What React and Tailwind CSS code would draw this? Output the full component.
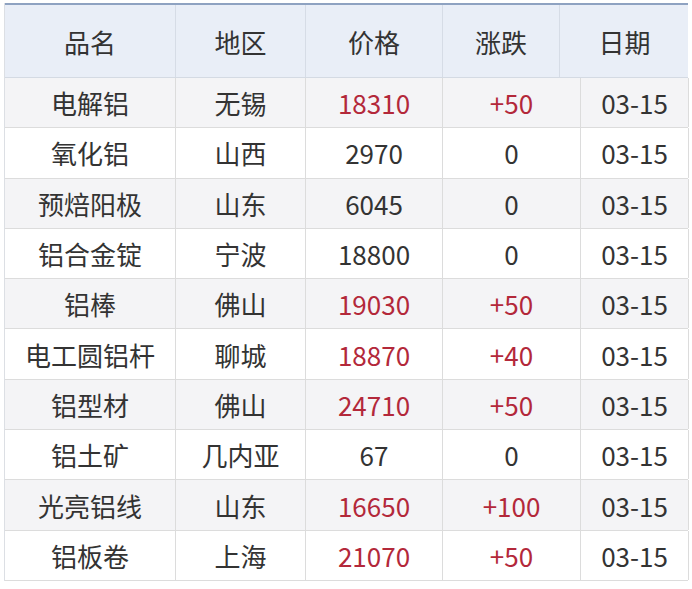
import React from 'react';

const rows = [
  ['电解铝', '无锡', '18310', '+50'],
  ['氧化铝', '山西', '2970', '0'],
  ['预焙阳极', '山东', '6045', '0'],
  ['铝合金锭', '宁波', '18800', '0'],
  ['铝棒', '佛山', '19030', '+50'],
  ['电工圆铝杆', '聊城', '18870', '+40'],
  ['铝型材', '佛山', '24710', '+50'],
  ['铝土矿', '几内亚', '67', '0'],
  ['光亮铝线', '山东', '16650', '+100'],
  ['铝板卷', '上海', '21070', '+50'],
];

export default function App() {
  return (
    <div
      className="w-[692px] h-[589px] bg-white pt-[3px] pl-[4px] text-[26px] text-[#333]"
      style={{ fontFamily: '"Noto Sans CJK SC", "Noto Sans", sans-serif' }}
    >
      <div className="w-[684px] border-l border-[#dcdfe4]">
        <div className="grid grid-cols-[171px_130px_137px_117px_129px] h-[75px] bg-[#e9eef7] border-t-2 border-t-[#8ea2c1] border-b border-b-[#d4dae3]">
          {['品名', '地区', '价格', '涨跌', '日期'].map((h, i) => (
            <div
              key={h}
              className={`flex items-center justify-center ${i < 4 ? 'border-r border-[#d6dce6]' : ''}`}
            >
              {h}
            </div>
          ))}
        </div>

        {rows.map((r, idx) => {
          const up = r[3] !== '0';
          return (
            <div
              key={r[0]}
              className={`grid grid-cols-[171px_130px_137px_138px_108px] h-[50.3px] border-b border-[#dcdcdc] ${
                idx % 2 === 0 ? 'bg-[#f4f4f6]' : 'bg-white'
              }`}
            >
              <div className="flex items-center justify-center border-r border-[#dcdcdc]">{r[0]}</div>
              <div className="flex items-center justify-center border-r border-[#dcdcdc]">{r[1]}</div>
              <div className={`flex items-center justify-center border-r border-[#dcdcdc] ${up ? 'text-[#b3283a]' : ''}`}>
                {r[2]}
              </div>
              <div className={`flex items-center justify-center border-r border-[#dcdcdc] ${up ? 'text-[#b3283a]' : ''}`}>
                {r[3]}
              </div>
              <div className="flex items-center justify-center border-r border-[#dcdcdc]">03-15</div>
            </div>
          );
        })}
      </div>
    </div>
  );
}
